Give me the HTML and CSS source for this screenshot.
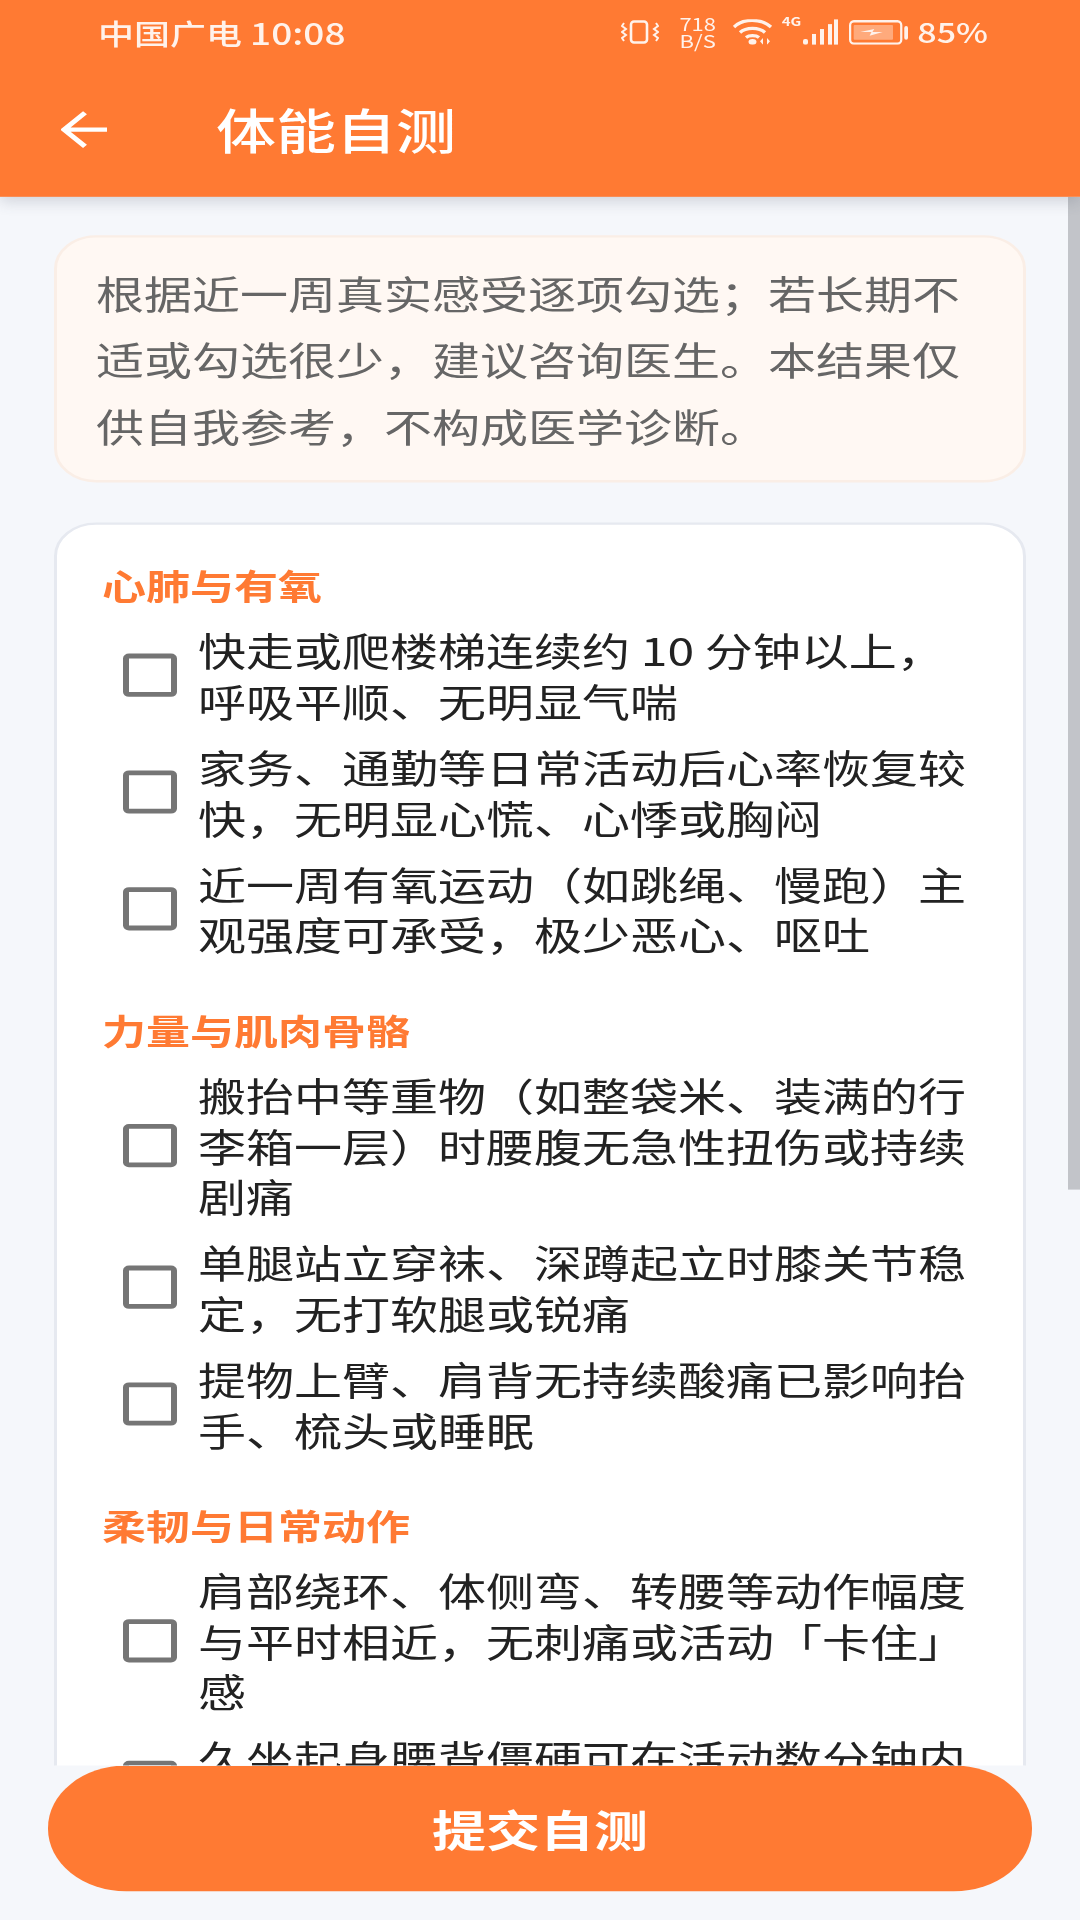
FILE: index.html
```html
<!DOCTYPE html>
<html lang="zh-CN">

<head>
    <meta charset="UTF-8">
    <meta name="viewport" content="width=device-width, initial-scale=1.0">
    <title>体能自测</title>
    <link rel="stylesheet" href="styles.css">
</head>

<body>
    <div class="screen">
        <header class="topbar">
            <div class="status">
                <span class="carrier">中国广电 <span class="time">10:08</span></span>
                <div class="status-icons">
                    <svg class="ic-vibrate" viewBox="0 0 38 24" preserveAspectRatio="none">
                        <rect x="10" y="1.5" width="16" height="21" rx="3" fill="none" stroke="#fff" stroke-width="2.6" />
                        <path d="M3 3l-2 3 4 3-4 3 4 3-4 3 2 3M35 3l2 3-4 3 4 3-4 3 4 3-2 3" fill="none" stroke="#fff" stroke-width="2" />
                    </svg>
                    <div class="speed">718<br>B/S</div>
                    <svg class="ic-wifi" viewBox="0 0 40 26" preserveAspectRatio="none">
                        <path d="M1 8C10-1 28-1 38 8M7 13.500c6-5.500 19-5.500 25 0M13 18.500c3-2.500 10-2.500 13 0" fill="none" stroke="#fff" stroke-width="3.400" />
                        <ellipse cx="19.500" cy="23" rx="4" ry="3" fill="#fff" />
                        <path d="M30 19l-3 3.500 3 3.500zM34 19l3 3.500-3 3.500z" fill="#fff" />
                    </svg>
                    <span class="net">4G</span>
                    <svg class="ic-signal" viewBox="0 0 35 26" preserveAspectRatio="none">
                        <rect x="0" y="20" width="5" height="6" rx="2" fill="#fff" />
                        <rect x="9" y="15" width="4" height="11" fill="#fff" />
                        <rect x="17" y="10" width="4" height="16" fill="#fff" />
                        <rect x="25" y="5" width="4" height="21" fill="#fff" />
                        <rect x="31" y="0" width="4" height="26" fill="#fff" />
                    </svg>
                    <svg class="ic-battery" viewBox="0 0 63 25" preserveAspectRatio="none">
                        <rect x="1.200" y="1.200" width="54.600" height="22.600" rx="4" fill="none" stroke="#fff" stroke-width="2.400" />
                        <rect x="5" y="5" width="42" height="15" rx="1" fill="#fff" opacity=".4" />
                        <path d="M12 12l15-3-2 3h11l-14 4 2-4z" fill="#fff" />
                        <rect x="59" y="6" width="4" height="14" rx="2" fill="#fff" />
                    </svg>
                    <span class="percent">85%</span>
                </div>
            </div>
            <div class="toolbar">
                <svg class="back" viewBox="0 0 48 48">
                    <path d="M46 24H4M24 3L3 24l21 21" fill="none" stroke="#fff" stroke-width="5.500" />
                </svg>
                <h1 class="title">体能自测</h1>
            </div>
        </header>

        <main class="content">
            <div class="scrollbar"></div>
            <div class="notice">根据近一周真实感受逐项勾选；若长期不适或勾选很少，建议咨询医生。本结果仅供自我参考，不构成医学诊断。</div>

            <div class="card">
                <section class="group">
                    <h2>心肺与有氧</h2>
                    <label class="item"><span class="box"></span><p>快走或爬楼梯连续约 10 分钟以上，呼吸平顺、无明显气喘</p></label>
                    <label class="item"><span class="box"></span><p>家务、通勤等日常活动后心率恢复较快，无明显心慌、心悸或胸闷</p></label>
                    <label class="item"><span class="box"></span><p>近一周有氧运动（如跳绳、慢跑）主观强度可承受，极少恶心、呕吐</p></label>
                </section>
                <section class="group">
                    <h2>力量与肌肉骨骼</h2>
                    <label class="item"><span class="box"></span><p>搬抬中等重物（如整袋米、装满的行李箱一层）时腰腹无急性扭伤或持续剧痛</p></label>
                    <label class="item"><span class="box"></span><p>单腿站立穿袜、深蹲起立时膝关节稳定，无打软腿或锐痛</p></label>
                    <label class="item"><span class="box"></span><p>提物上臂、肩背无持续酸痛已影响抬手、梳头或睡眠</p></label>
                </section>
                <section class="group">
                    <h2>柔韧与日常动作</h2>
                    <label class="item"><span class="box"></span><p>肩部绕环、体侧弯、转腰等动作幅度与平时相近，无刺痛或活动「卡住」感</p></label>
                    <label class="item"><span class="box"></span><p>久坐起身腰背僵硬可在活动数分钟内缓解，无明显持续疼痛</p></label>
                </section>
            </div>
        </main>

        <footer class="footer">
            <button class="submit">提交自测</button>
        </footer>
    </div>
</body>

</html>
```

FILE: styles.css
```css
* {
    margin: 0;
    padding: 0;
    box-sizing: border-box;
    font-family: "Noto Sans CJK SC", "Noto Sans", sans-serif;
}

html,
body {
    width: 1080px;
    height: 1920px;
    overflow: hidden;
    background-color: #f5f7fb;
}

/* the capture is 1080x2400 squeezed to 1920 tall */
.screen {
    width: 1080px;
    height: 2400px;
    display: flex;
    flex-direction: column;
    transform: scaleY(0.8);
    transform-origin: top left;
}

.topbar {
    height: 246px;
    flex-shrink: 0;
    background-color: #ff7a33;
    color: #fff;
    box-shadow: 0 6px 16px rgba(60, 70, 90, 0.2);
    position: relative;
    z-index: 2;
}

.status {
    height: 84px;
    padding: 0 92px 4px 98px;
    display: flex;
    align-items: center;
    justify-content: space-between;
    opacity: 0.9;
    font-weight: 500;
}

.carrier {
    font-size: 36px;
    line-height: 44px;
}

.time {
    font-size: 37px;
}

.status-icons {
    display: flex;
    align-items: center;
}

.ic-vibrate {
    width: 38px;
    height: 30px;
    margin-right: 19px;
}

.speed {
    width: 40px;
    text-align: center;
    font-size: 22px;
    line-height: 21px;
    font-weight: 400;
}

.ic-wifi {
    width: 40px;
    height: 32px;
    margin-left: 15px;
}

.net {
    align-self: flex-start;
    margin-left: 9px;
    font-size: 15px;
    line-height: 18px;
    font-weight: 700;
}

.ic-signal {
    width: 35px;
    height: 32px;
    margin-left: 2px;
}

.ic-battery {
    width: 59px;
    height: 31px;
    margin-left: 11px;
}

.percent {
    margin-left: 9px;
    font-size: 34px;
    line-height: 44px;
}

.toolbar {
    height: 162px;
    padding: 0 0 6px 61px;
    display: flex;
    align-items: center;
}

.back {
    width: 48px;
    height: 48px;
}

.title {
    margin-left: 107px;
    margin-bottom: 6px;
    font-size: 60px;
    font-weight: 500;
}

.content {
    flex: 1;
    min-height: 0;
    overflow: hidden;
    padding: 48px 54px 0;
    position: relative;
}

.scrollbar {
    position: absolute;
    top: 0;
    right: 0;
    width: 12px;
    height: 1241px;
    background-color: #c2c4c9;
}

.notice {
    padding: 27px 39px;
    font-size: 48px;
    line-height: 83px;
    color: #666;
    background-color: #fff8f3;
    border: 3px solid #faeee6;
    border-radius: 42px;
}

.card {
    margin-top: 50px;
    padding: 43px 45px 48px;
    background-color: #fff;
    border: 3px solid #e6e9f0;
    border-radius: 42px;
}

.group + .group {
    margin-top: 46px;
}

.group h2 {
    font-size: 44px;
    line-height: 64px;
    font-weight: 700;
    color: #ff7a33;
}

.item {
    display: flex;
    align-items: center;
    padding: 10px 0 10px 21px;
    font-size: 48px;
    line-height: 63px;
    color: #222;
}

.group h2 + .item {
    margin-top: 8px;
}

.box {
    width: 54px;
    height: 54px;
    flex-shrink: 0;
    margin-right: 21px;
    border: 6px solid #757575;
    border-radius: 6px;
}

.footer {
    flex-shrink: 0;
    padding: 0 48px 36px;
    background-color: #f5f7fb;
    position: relative;
    z-index: 1;
}

.submit {
    display: block;
    width: 100%;
    height: 157px;
    border: 0;
    border-radius: 78px;
    background-color: #ff7a33;
    color: #fff;
    font-size: 54px;
    font-weight: 700;
}
```
